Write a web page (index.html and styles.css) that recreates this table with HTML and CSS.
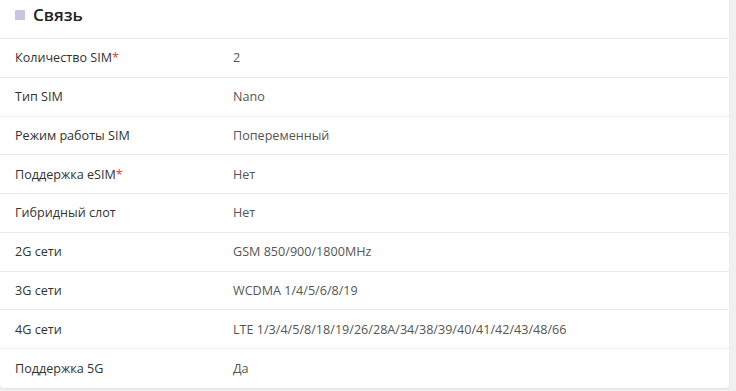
FILE: index.html
```html
<!DOCTYPE html>
<html lang="ru">
<head>
<meta charset="utf-8">
<link rel="stylesheet" href="styles.css">
</head>
<body>
<section class="card">
  <header class="card-head">
    <span class="marker"></span>
    <h2 class="title">Связь</h2>
  </header>
  <div class="rows">
    <div class="row"><div class="label">Количество SIM<span class="req">*</span></div><div class="value">2</div></div>
    <div class="row"><div class="label">Тип SIM</div><div class="value">Nano</div></div>
    <div class="row"><div class="label">Режим работы SIM</div><div class="value">Попеременный</div></div>
    <div class="row"><div class="label">Поддержка eSIM<span class="req">*</span></div><div class="value">Нет</div></div>
    <div class="row"><div class="label">Гибридный слот</div><div class="value">Нет</div></div>
    <div class="row"><div class="label">2G сети</div><div class="value">GSM 850/900/1800MHz</div></div>
    <div class="row"><div class="label">3G сети</div><div class="value">WCDMA 1/4/5/6/8/19</div></div>
    <div class="row"><div class="label">4G сети</div><div class="value">LTE 1/3/4/5/8/18/19/26/28A/34/38/39/40/41/42/43/48/66</div></div>
    <div class="row"><div class="label">Поддержка 5G</div><div class="value">Да</div></div>
  </div>
</section>
</body>
</html>
```
FILE: styles.css
```css
html, body {
  margin: 0;
  padding: 0;
  background: #f0f0f0;
}
body {
  font-family: "Open Sans", "Noto Sans", Arial, sans-serif;
  width: 736px;
  height: 391px;
  overflow: hidden;
}
.card {
  width: 729px;
  background: #fff;
  border-radius: 0 0 4px 4px;
  box-shadow: 0 1px 2px rgba(0, 0, 0, 0.06);
}
.card-head {
  height: 38px;
  display: flex;
  align-items: center;
  padding-left: 15px;
  gap: 8px;
  border-bottom: 1px solid #ebebeb;
  box-sizing: content-box;
}
.marker {
  width: 10px;
  height: 10px;
  background: #c6c6de;
  margin-top: -9px;
}
.title {
  margin: -9px 0 0;
  font-size: 17px;
  font-weight: 600;
  color: #222;
  line-height: 20px;
}
.row {
  display: flex;
  align-items: center;
  height: 38.75px;
  box-sizing: border-box;
  border-bottom: 1px solid #ebebeb;
  font-size: 12.6px;
}
.row:last-child {
  border-bottom: none;
}
.label {
  width: 218px;
  padding-left: 15px;
  color: #333;
}
.value {
  color: #555;
}
.req {
  color: #e5383b;
}
```
